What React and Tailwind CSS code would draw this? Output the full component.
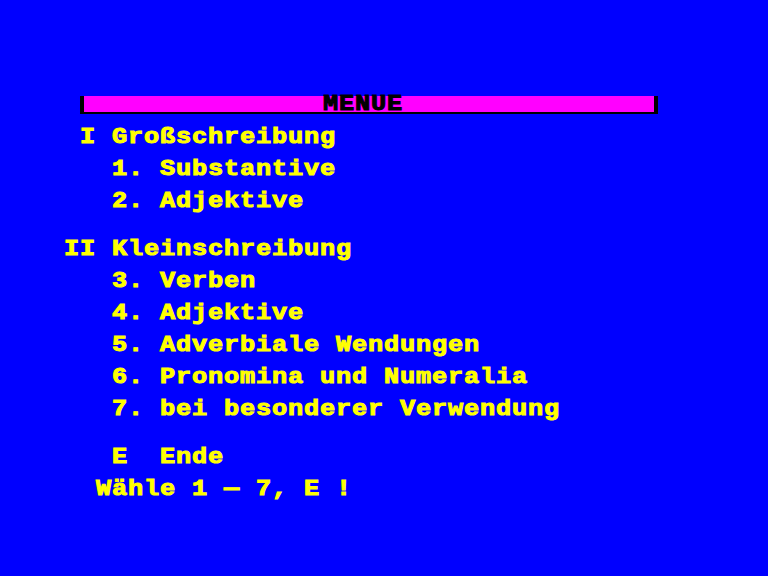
import React from 'react';

// Amstrad-style text screen: 16px character cells, text starts at x=64
const GROUPS = [
  [
    { col: 1, text: 'I Großschreibung' },
    { col: 3, text: '1. Substantive' },
    { col: 3, text: '2. Adjektive' },
  ],
  [
    { col: 0, text: 'II Kleinschreibung' },
    { col: 3, text: '3. Verben' },
    { col: 3, text: '4. Adjektive' },
    { col: 3, text: '5. Adverbiale Wendungen' },
    { col: 3, text: '6. Pronomina und Numeralia' },
    { col: 3, text: '7. bei besonderer Verwendung' },
  ],
  [
    { col: 3, text: 'E  Ende' },
    { col: 2, text: 'Wähle 1 — 7, E !' },
  ],
];

const PAD = ['pl-[64px]', 'pl-[80px]', 'pl-[96px]', 'pl-[112px]'];

// glyphs are stretched sideways so each one fills its 16px cell
function Chars({ children, className = 'translate-y-[2px]' }) {
  return (
    <span className={`inline-block origin-left scale-x-[1.15] whitespace-pre [-webkit-text-stroke:1px_currentColor] ${className}`}>
      {children}
    </span>
  );
}

function Line({ col, text }) {
  return (
    <div className={`h-4 leading-4 ${PAD[col]}`}>
      <Chars>{text}</Chars>
    </div>
  );
}

export default function App() {
  return (
    <div
      className="w-[768px] h-[576px] bg-[#0000ff] text-[#ffff00] font-bold text-[22px] tracking-[0.71px] pt-[96px] overflow-hidden"
      style={{ fontFamily: '"Liberation Mono", "DejaVu Sans Mono", monospace' }}
    >
      {/* title bar */}
      <div className="ml-[80px] w-[578px] h-[18px] bg-black pl-1 pr-1 pb-[2px]">
        <div className="h-4 bg-[#ff00ff] text-black leading-4 pl-[239px]">
          <Chars className="translate-y-[1px]">MENUE</Chars>
        </div>
      </div>

      <div className="mt-[14px] flex flex-col gap-8">
        {GROUPS.map((group, i) => (
          <div key={i} className="flex flex-col gap-4">
            {group.map((line, j) => (
              <Line key={j} {...line} />
            ))}
          </div>
        ))}
      </div>
    </div>
  );
}
